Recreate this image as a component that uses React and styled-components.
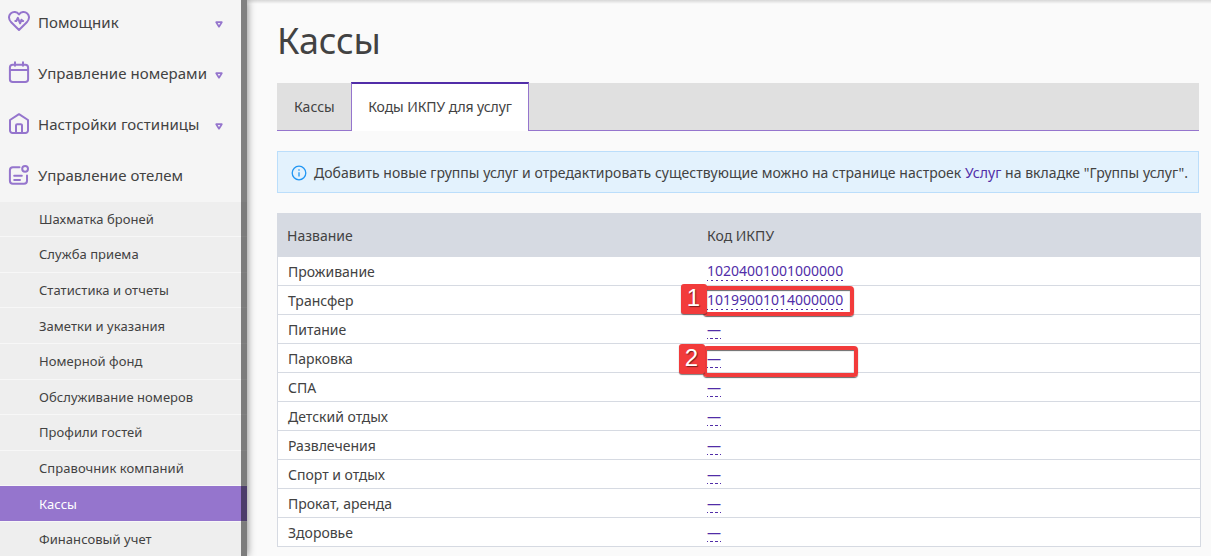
import React from 'react'
import styled, {createGlobalStyle} from 'styled-components'

const ACCENT = '#9575cd'
const LINK = '#512da8'

const menuItems = [
    {title: 'Помощник', icon: 'heart', arrow: true},
    {title: 'Управление номерами', icon: 'calendar', arrow: true},
    {title: 'Настройки гостиницы', icon: 'home', arrow: true},
    {title: 'Управление отелем', icon: 'note', arrow: false},
]

const subItems = [
    'Шахматка броней',
    'Служба приема',
    'Статистика и отчеты',
    'Заметки и указания',
    'Номерной фонд',
    'Обслуживание номеров',
    'Профили гостей',
    'Справочник компаний',
    'Кассы',
    'Финансовый учет',
]

const rows = [
    {name: 'Проживание', code: '10204001001000000'},
    {name: 'Трансфер', code: '10199001014000000', mark: 1},
    {name: 'Питание'},
    {name: 'Парковка', mark: 2},
    {name: 'СПА'},
    {name: 'Детский отдых'},
    {name: 'Развлечения'},
    {name: 'Спорт и отдых'},
    {name: 'Прокат, аренда'},
    {name: 'Здоровье'},
]

const iconShapes = {
    heart: (
        <>
            <path d="M11 20 3.200 12.200C.3 9.200.4 5.500 2.700 3.400 5.200 1.200 8.800 1.600 11 4.400c2.200-2.800 5.800-3.200 8.300-1 2.300 2.100 2.400 5.800-.5 8.800z"/>
            <path d="M7.300 11h1l1.600-3.200 2.200 5.600 1.300-3.600 1.100 1.200h.7"/>
        </>
    ),
    calendar: (
        <>
            <rect x="1.900" y="3.700" width="18.200" height="17.300" rx="2.800"/>
            <path d="M2 9h18M7 1.200v3.600M15 1.200v3.600"/>
        </>
    ),
    home: (
        <>
            <path d="M2 8 11 2.200 20 8v10.500a2.500 2.500 0 0 1-2.500 2.500h-13A2.500 2.500 0 0 1 2 18.500z"/>
            <path d="M8 21v-7.600a1.200 1.200 0 0 1 1.200-1.200h3.600a1.200 1.200 0 0 1 1.200 1.200V21"/>
        </>
    ),
    note: (
        <>
            <path d="M11.500 4.200h-6.600a3 3 0 0 0-3 3v10.600a3 3 0 0 0 3 3H16a3 3 0 0 0 3-3v-5.300"/>
            <circle cx="17.100" cy="5.800" r="2.900"/>
            <path d="M6.200 12.700h7.600M6.200 17h5.800"/>
        </>
    ),
}

const Mark = ({number}) => (
    <StyledMark $number={number}>
        <StyledBadge $number={number}>{number}</StyledBadge>
    </StyledMark>
)

const App = () => (
    <StyledPage>
        <GlobalStyle/>
        <StyledSidebar>
            <StyledMenu>
                {menuItems.map(({title, icon, arrow}) => (
                    <StyledMenuItem key={title}>
                        <StyledIcon viewBox="0 0 22 22">{iconShapes[icon]}</StyledIcon>
                        <StyledMenuTitle>{title}</StyledMenuTitle>
                        {arrow? <StyledArrow viewBox="0 0 8 7"><path d="M1.200 1.200h5.600L4 5.700z"/></StyledArrow>: null}
                    </StyledMenuItem>
                ))}
            </StyledMenu>
            {subItems.map((title) => (
                <StyledSubItem key={title} $active={title === 'Кассы'}>{title}</StyledSubItem>
            ))}
            <StyledScrollbar/>
        </StyledSidebar>
        <StyledContent>
            <StyledTitle>Кассы</StyledTitle>
            <StyledTabs>
                <StyledTab>Кассы</StyledTab>
                <StyledTab $active>Коды ИКПУ для услуг</StyledTab>
            </StyledTabs>
            <StyledNotice>
                <StyledInfo viewBox="0 0 16 16">
                    <circle cx="8" cy="8" r="6.800"/>
                    <path d="M8 7.200v4.300M8 4.300v1.500"/>
                </StyledInfo>
                <span>
                    Добавить новые группы услуг и отредактировать существующие можно на странице настроек <StyledLink>Услуг</StyledLink> на вкладке "Группы услуг".
                </span>
            </StyledNotice>
            <StyledTable>
                <StyledHead>
                    <div>Название</div>
                    <div>Код ИКПУ</div>
                </StyledHead>
                {rows.map(({name, code, mark}) => (
                    <StyledRow key={name}>
                        <div>{name}</div>
                        <StyledCodeCell>
                            <StyledCode $empty={!code}>{code || '—'}</StyledCode>
                            {mark? <Mark number={mark}/>: null}
                        </StyledCodeCell>
                    </StyledRow>
                ))}
            </StyledTable>
        </StyledContent>
    </StyledPage>
)

const GlobalStyle = createGlobalStyle`
    body {
        margin: 0;
        overflow: hidden;
        background: #fafafa;
        color: #424242;
        font-family: "Noto Sans", sans-serif;
        font-size: 14px;
    }
    * {
        box-sizing: border-box;
    }
`
const StyledPage = styled.div`
    display: flex;
    width: 1211px;
    height: 556px;
    overflow: hidden;
`
const StyledSidebar = styled.div`
    position: relative;
    flex: none;
    width: 247px;
    height: 556px;
    clip-path: inset(0 -10px 0 0);
    background: #f5f5f5;
    box-shadow: 0 0 8px rgba(0, 0, 0, 0.5);
`
const StyledMenu = styled.div`
    height: 201.700px;
    overflow: hidden;
`
const StyledMenuItem = styled.div`
    display: flex;
    align-items: center;
    height: 51px;
    padding: 0 24px 0 8px;
    font-size: 15px;
    letter-spacing: 0.050px;

    &:first-child {
        margin-top: -4px;
    }
`
const StyledIcon = styled.svg`
    flex: none;
    width: 22px;
    height: 22px;
    margin-top: -1px;
    fill: none;
    stroke: ${ACCENT};
    stroke-width: 2;
    stroke-linecap: round;
    stroke-linejoin: round;
`
const StyledMenuTitle = styled.div`
    flex: 1;
    margin-left: 8px;
    white-space: nowrap;
`
const StyledArrow = styled.svg`
    flex: none;
    width: 8px;
    height: 7px;
    margin-top: 6px;
    fill: none;
    stroke: ${ACCENT};
    stroke-width: 1.700;
    stroke-linejoin: round;
`
const StyledSubItem = styled.div`
    height: 35.600px;
    padding: 0.150px 0 0 39px;
    border-bottom: 1px solid #f7f7f7;
    background: ${({$active}) => $active? ACCENT: '#eeeeee'};
    color: ${({$active}) => $active? '#ffffff': '#424242'};
    font-size: 13px;
    letter-spacing: 0.050px;
    line-height: 35.200px;
`
const StyledScrollbar = styled.div`
    position: absolute;
    top: 0;
    right: 0;
    width: 6px;
    height: 100%;
    background: rgba(0, 0, 0, 0.480);
`
const StyledContent = styled.div`
    flex: 1;
    min-width: 0;
    padding: 0 12px 0 30px;
    background: linear-gradient(rgba(0, 0, 0, 0.140), rgba(0, 0, 0, 0) 4px);
`
const StyledTitle = styled.h1`
    height: 83px;
    margin: 0;
    font-size: 36px;
    font-weight: 400;
    letter-spacing: -0.200px;
    line-height: 82px;
`
const StyledTabs = styled.div`
    display: flex;
    height: 48px;
    border-bottom: 1px solid ${ACCENT};
    background: #e0e0e0;
`
const StyledTab = styled.div`
    height: ${({$active}) => $active? '49px': '47px'};
    margin-top: ${({$active}) => $active? '-1px': '0'};
    padding: 0 16px 0 ${({$active}) => $active? '16.500px': '16px'};
    border: solid ${({$active}) => $active? ACCENT: 'transparent'};
    border-width: 0 1px;
    border-top: ${({$active}) => $active? `2px solid ${LINK}`: 'none'};
    background: ${({$active}) => $active? '#ffffff': 'none'};
    letter-spacing: ${({$active}) => $active? '-0.080px': '0'};
    line-height: ${({$active}) => $active? '46px': '48px'};
    white-space: nowrap;

    &:first-child {
        border-right: none;
    }
`
const StyledNotice = styled.div`
    display: flex;
    align-items: center;
    height: 42px;
    margin-top: 20px;
    padding-left: 13px;
    border: 1px solid #bbdefb;
    background: #e3f2fd;
    letter-spacing: 0.035px;
    white-space: nowrap;
`
const StyledInfo = styled.svg`
    flex: none;
    width: 16px;
    height: 16px;
    margin: 2px 7px 0 0;
    fill: none;
    stroke: #2196f3;
    stroke-width: 1.300;
`
const StyledLink = styled.a`
    color: ${LINK};
`
const StyledTable = styled.div`
    width: 924px;
    margin-top: 20px;
    border: 1px solid #d6dae2;
    border-top: none;
    background: #ffffff;
`
const StyledHead = styled.div`
    display: grid;
    grid-template-columns: 420px 1fr;
    height: 44px;
    margin: 0 -1px;
    padding-left: 10px;
    background: #d6dae2;
    line-height: 46px;
`
const StyledRow = styled.div`
    display: grid;
    grid-template-columns: 419px 1fr;
    height: 29px;
    padding-left: 10px;
    border-bottom: 1px solid #d6dae2;
    line-height: 29px;

    &:last-child {
        height: 28px;
        border-bottom: none;
    }
`
const StyledCodeCell = styled.div`
    position: relative;
`
const StyledCode = styled.span`
    display: inline-block;
    height: 24px;
    background: linear-gradient(90deg, ${LINK} ${({$empty}) => $empty? '3px': '2px'}, transparent 0) ${({$empty}) => $empty? '-2px': '-1px'} 100% / 5px 1px repeat-x;
    color: ${LINK};
    line-height: ${({$empty}) => $empty? '30px': '28px'};
    vertical-align: top;
`
// numbered frame laid over a code cell
const StyledMark = styled.div`
    position: absolute;
    top: ${({$number}) => $number === 1? '0': '2px'};
    left: -4px;
    width: ${({$number}) => $number === 1? '151px': '155px'};
    height: ${({$number}) => $number === 1? '30px': '31px'};
    border: 4px solid #f23b3b;
    border-radius: 4px;
    box-shadow: 0 1px 1px rgba(40, 40, 40, 0.700), inset 0 1px 1px rgba(40, 40, 40, 0.700);
`
const StyledBadge = styled.div`
    position: absolute;
    top: -6px;
    left: ${({$number}) => $number === 1? '-26.500px': '-28.500px'};
    width: 26px;
    height: 30px;
    border-radius: 3px;
    background: #f23b3b;
    box-shadow: 0 1px 1px rgba(40, 40, 40, 0.600);
    color: #ffffff;
    font-family: "Liberation Sans", sans-serif;
    font-size: 24px;
    line-height: 28px;
    text-align: center;
    text-shadow: 1px 1px 1px rgba(0, 0, 0, 0.500);
`
export default App
